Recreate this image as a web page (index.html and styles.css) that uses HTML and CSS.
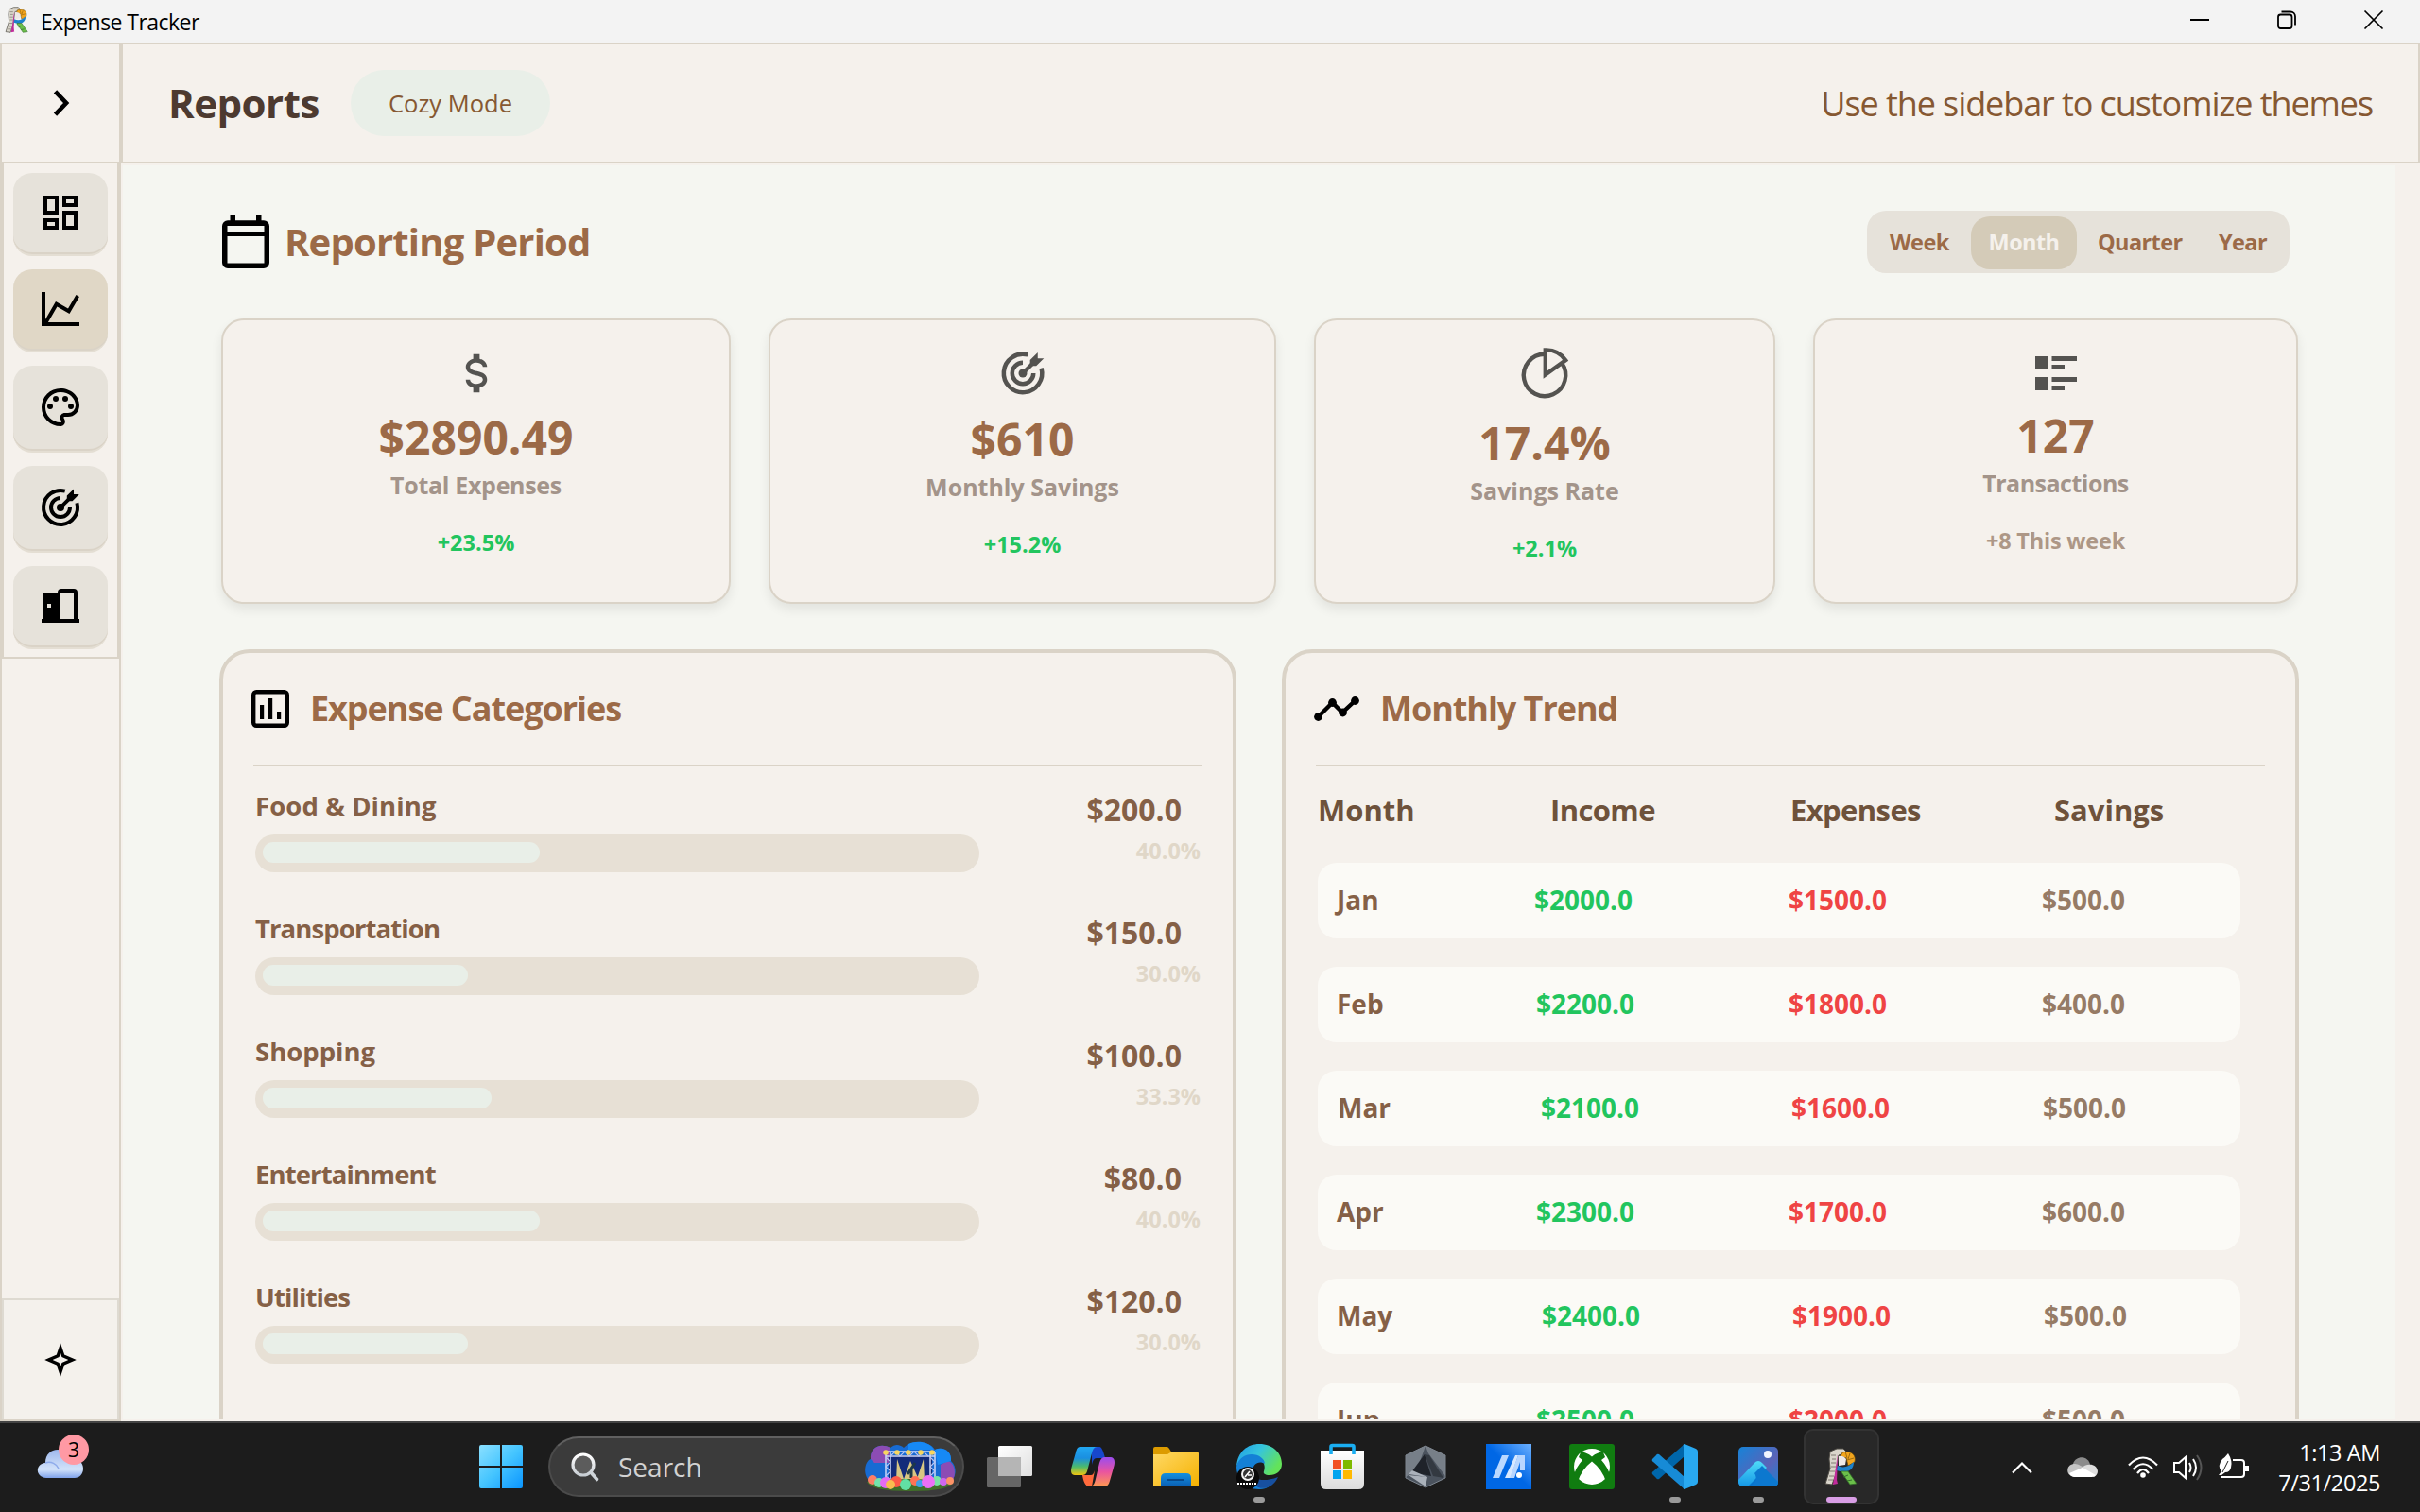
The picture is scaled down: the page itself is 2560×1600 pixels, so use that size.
FILE: index.html
```html
<!DOCTYPE html>
<html lang="en">
<head>
<meta charset="utf-8">
<title>Expense Tracker</title>
<link rel="stylesheet" href="styles.css">
</head>
<body>
<svg class="defs" width="0" height="0" aria-hidden="true">
  <defs>
    <linearGradient id="gWin" x1="0" y1="0" x2="1" y2="1"><stop offset="0" stop-color="#8be0ff"/><stop offset=".5" stop-color="#45c5ff"/><stop offset="1" stop-color="#0a95ff"/></linearGradient>
    <linearGradient id="gCloud" x1="0" y1="0" x2="0" y2="1"><stop offset="0" stop-color="#9db8ee"/><stop offset=".7" stop-color="#d3e3fa"/><stop offset="1" stop-color="#7fa2ea"/></linearGradient>
    <linearGradient id="gFolder" x1="0" y1="0" x2="1" y2="1"><stop offset="0" stop-color="#ffd966"/><stop offset="1" stop-color="#f5b100"/></linearGradient>
    <linearGradient id="gBlue" x1="0" y1="0" x2="0" y2="1"><stop offset="0" stop-color="#1490df"/><stop offset="1" stop-color="#0a5fb4"/></linearGradient>
    <linearGradient id="gCopA" x1="0" y1="0" x2="0" y2="1"><stop offset="0" stop-color="#22a7f2"/><stop offset=".4" stop-color="#1a8fe0"/><stop offset=".7" stop-color="#4cbb6c"/><stop offset="1" stop-color="#f2c50f"/></linearGradient>
    <linearGradient id="gCopB" x1="0" y1="0" x2="0" y2="1"><stop offset="0" stop-color="#9a4cf0"/><stop offset=".5" stop-color="#e954a0"/><stop offset="1" stop-color="#ff9a4f"/></linearGradient>
    <linearGradient id="gEdge" x1="0" y1="0" x2="1" y2=".5"><stop offset="0" stop-color="#1f9be8"/><stop offset=".5" stop-color="#36c5dc"/><stop offset="1" stop-color="#63e35a"/></linearGradient>
    <linearGradient id="gBag" x1="0" y1="0" x2="0" y2="1"><stop offset="0" stop-color="#fff"/><stop offset="1" stop-color="#dcdcdc"/></linearGradient>
    <linearGradient id="gPhoto" x1="0" y1="0" x2="1" y2="1"><stop offset="0" stop-color="#1683d8"/><stop offset=".6" stop-color="#5a63b8"/><stop offset="1" stop-color="#1f7fd0"/></linearGradient>
    <linearGradient id="gPeak" x1="0" y1="0" x2="0" y2="1"><stop offset="0" stop-color="#4fdcf8"/><stop offset="1" stop-color="#1597e6"/></linearGradient>
    <linearGradient id="gAsus" x1="0" y1="1" x2="1" y2="0"><stop offset=".5" stop-color="#0067e5"/><stop offset="1" stop-color="#6cb0ff"/></linearGradient>
    <linearGradient id="gTask" x1="0" y1="0" x2="1" y2="1"><stop offset="0" stop-color="#fff"/><stop offset="1" stop-color="#dfdfdf"/></linearGradient>
    <linearGradient id="gLens" x1="0" y1="0" x2="0" y2="1"><stop offset="0" stop-color="#fff"/><stop offset="1" stop-color="#c8ced4"/></linearGradient>
    <symbol id="logo" viewBox="0 0 36 40">
      <path d="M13 1 6 4 5 12 6 22 1 38 8 39 12 28 15 8 24 5 20 1z" fill="#d9d5cb" stroke="#4d4a44" stroke-width="1"/>
      <path d="M7 8h5M8 12h4M7 16h5M7 20h5M6 25h5M5 30h5M4 34h5" stroke="#807b72" stroke-width="1"/>
      <path d="M14 7 13 36 9 39 11 27z" fill="#c12b9b"/>
      <path d="M12 30 14 38 9 39z" fill="#c12b9b"/>
      <path d="M19 5c9-3 15 3 13 10l-7 4-2-8-6-2z" fill="#f2a51d" stroke="#5d4511" stroke-width=".7"/>
      <path d="m22 4 2 7M27 6l-2 6M31 11l-7 2" stroke="#8a5d0c" stroke-width=".8"/>
      <path d="M14 19c6 3 12 1 17-4 0 6-3 9-7 10-4 1-8 0-11-1z" fill="#1d82cb"/>
      <path d="M15 9c3-1 6 0 8 3l-1 6-7 1z" fill="#eee9e7"/>
      <path d="M18 25h7l9 13-7 1-9-13z" fill="#6bbf4a" stroke="#31682a" stroke-width=".8"/>
      <path d="m25 29-5 2M29 34l-5 1" stroke="#32702a" stroke-width="1"/>
    </symbol>
    <symbol id="target" viewBox="0 0 24 24">
      <path d="M14.4 3.3A9 9 0 1 0 20.7 9.6M12 7a5 5 0 1 0 5 5" fill="none" stroke="currentColor" stroke-width="2"/>
      <circle cx="12" cy="12" r="2" fill="currentColor"/>
      <path d="m12 12 4.6-4.6" stroke="currentColor" stroke-width="1.9"/>
      <path d="M15.4 8.6V5.8L19 2.2V5h2.9l-3.6 3.6z" fill="currentColor"/>
    </symbol>
  </defs>
</svg>

<div class="titlebar">
  <svg class="app-logo"><use href="#logo"/></svg>
  <span class="app-name">Expense Tracker</span>
  <div class="window-controls">
    <svg viewBox="0 0 20 20"><path d="M0 10h20" stroke="#000" stroke-width="2"/></svg>
    <svg viewBox="0 0 20 20" fill="none" stroke="#000" stroke-width="1.8"><rect x="1" y="4.5" width="14.5" height="14.5" rx="2.5"/><path d="M4.5 1.5H14a5 5 0 0 1 5 5v9"/></svg>
    <svg viewBox="0 0 20 20"><path d="m.5.5 19 19m0-19-19 19" stroke="#000" stroke-width="1.7"/></svg>
  </div>
</div>

<div class="app">
  <aside class="sidebar">
    <div class="expand"><svg class="chevron" viewBox="0 0 18 28"><path d="m2.5 1.8 11.6 12.2L2.5 26.2" fill="none" stroke="#000" stroke-width="4.6"/></svg></div>
    <nav class="nav">
      <div class="nav-btn"><svg viewBox="0 0 24 24"><path d="M4 4h6v8H4zM14 4h6v4h-6zM4 16h6v4H4zM14 12h6v8h-6z" fill="none" stroke="#000" stroke-width="2"/></svg></div>
      <div class="nav-btn active"><svg viewBox="0 0 24 24"><path d="M16 11.78 20.24 4.45l1.73 1-5.23 9.05-6.51-3.75L5.46 19H22v2H2V3h2v14.54L9.5 8z"/></svg></div>
      <div class="nav-btn tall"><svg viewBox="0 0 24 24"><path d="M12 22A10 10 0 0 1 2 12 10 10 0 0 1 12 2c5.5 0 10 4 10 9a6 6 0 0 1-6 6h-1.8c-.3 0-.5.2-.5.5 0 .1.1.2.1.3.4.5.6 1.1.6 1.7.1 1.4-1 2.5-2.4 2.5m0-18a8 8 0 0 0 0 16c.3 0 .5-.2.5-.5 0-.2-.1-.3-.1-.4-.4-.5-.6-1-.6-1.6 0-1.4 1.1-2.5 2.5-2.5H16a4 4 0 0 0 4-4c0-3.900-3.600-7-8-7"/><circle cx="6.500" cy="11.500" r="1.500"/><circle cx="9.500" cy="7.500" r="1.500"/><circle cx="14.500" cy="7.500" r="1.500"/><circle cx="17.500" cy="11.500" r="1.500"/></svg></div>
      <div class="nav-btn tall"><svg><use href="#target"/></svg></div>
      <div class="nav-btn"><svg viewBox="0 0 24 24"><path fill-rule="evenodd" d="M3 5h7.500a2 2 0 0 1 2-2H19a2 2 0 0 1 2 2v14h1v2H2v-2h1zM5 11v2h2v-2zM12 5v14h7V5z"/></svg></div>
    </nav>
    <div class="sparkle"><svg viewBox="0 0 34 34"><path d="M17 4.500 19.800 12.800 29.500 17 19.800 21.200 17 29.500 14.200 21.200 4.500 17l9.700-4.200z" fill="none" stroke="#000" stroke-width="3.400" stroke-miterlimit="8"/></svg></div>
  </aside>

  <div class="content">
    <header class="topbar">
      <h1>Reports</h1>
      <span class="mode">Cozy Mode</span>
      <span class="hint">Use the sidebar to customize themes</span>
    </header>

    <main class="page">
      <section class="period">
        <svg class="calendar" viewBox="0 0 50 56"><path d="M8.500 0h5.500v5.300h22V0h5.500v5.300H44a6 6 0 0 1 6 6V50a6 6 0 0 1-6 6H6a6 6 0 0 1-6-6V11.300a6 6 0 0 1 6-6h2.500zM5.500 11v6h39v-6zM5.500 22v28.500h39V22z" fill-rule="evenodd"/></svg>
        <h2>Reporting Period</h2>
        <div class="segments">
          <span class="seg week">Week</span><span class="seg month">Month</span><span class="seg quarter">Quarter</span><span class="seg year">Year</span>
        </div>
      </section>

      <section class="cards">
        <div class="card c1">
          <svg class="card-icon" viewBox="0 0 24 24"><path d="M7 15h2c0 1.080 1.370 2 3 2s3-.920 3-2c0-1.100-1.040-1.500-3.240-2.030C9.640 12.440 7 11.780 7 9c0-1.790 1.470-3.310 3.500-3.820V3h3v2.180C15.530 5.690 17 7.210 17 9h-2c0-1.080-1.370-2-3-2s-3 .920-3 2c0 1.100 1.040 1.500 3.240 2.030C14.360 11.560 17 12.220 17 15c0 1.790-1.470 3.310-3.500 3.820V21h-3v-2.180C8.470 18.310 7 16.790 7 15"/></svg>
          <div class="value">$2890.49</div><div class="label">Total Expenses</div><div class="delta">+23.5%</div>
        </div>
        <div class="card c2">
          <svg class="card-icon"><use href="#target"/></svg>
          <div class="value">$610</div><div class="label">Monthly Savings</div><div class="delta">+15.2%</div>
        </div>
        <div class="card c3">
          <svg class="card-icon" viewBox="0 0 54 54"><g fill="none" stroke="#545350" stroke-width="4.400"><path d="M27 6.800A22.200 22.200 0 1 0 45 16"/><path d="M27.800 2.400V28.500L49.200 13.200A25 25 0 0 0 27.800 2.400z"/></g></svg>
          <div class="value">17.4%</div><div class="label">Savings Rate</div><div class="delta">+2.1%</div>
        </div>
        <div class="card c4">
          <svg class="card-icon" viewBox="0 0 54 54"><path d="M5 9h13.500v14H5zM22.500 9H49v5H22.500zM22.500 18h13.500v5H22.500zM5 31h13.500v14H5zM22.500 31H49v5H22.500zM22.500 40h13.500v5H22.500z"/></svg>
          <div class="value">127</div><div class="label">Transactions</div><div class="delta neutral">+8 This week</div>
        </div>
      </section>

      <section class="panels">
        <div class="panel">
          <div class="panel-head">
            <svg class="icon-bars" viewBox="0 0 40 40"><rect x="2.200" y="2.200" width="35.600" height="35.600" rx="3" fill="none" stroke="#000" stroke-width="4.400"/><path d="M9 16h4.200v15H9zM18 9h4.200v22H18zM27 23h4.200v8H27z"/></svg>
            <h3>Expense Categories</h3>
          </div>
          <div class="categories">
            <div class="category food"><div class="cat-main"><div class="cat-name">Food &amp; Dining</div><div class="track"><div class="fill" style="width:293px"></div></div></div><div class="cat-side"><div class="amount">$200.0</div><div class="share">40.0%</div></div></div>
            <div class="category"><div class="cat-main"><div class="cat-name">Transportation</div><div class="track"><div class="fill" style="width:217px"></div></div></div><div class="cat-side"><div class="amount">$150.0</div><div class="share">30.0%</div></div></div>
            <div class="category shopping"><div class="cat-main"><div class="cat-name">Shopping</div><div class="track"><div class="fill" style="width:242px"></div></div></div><div class="cat-side"><div class="amount">$100.0</div><div class="share">33.3%</div></div></div>
            <div class="category"><div class="cat-main"><div class="cat-name">Entertainment</div><div class="track"><div class="fill" style="width:293px"></div></div></div><div class="cat-side"><div class="amount">$80.0</div><div class="share">40.0%</div></div></div>
            <div class="category"><div class="cat-main"><div class="cat-name">Utilities</div><div class="track"><div class="fill" style="width:217px"></div></div></div><div class="cat-side"><div class="amount">$120.0</div><div class="share">30.0%</div></div></div>
          </div>
        </div>

        <div class="panel trend">
          <div class="panel-head">
            <svg class="icon-trend" viewBox="0 0 48 26"><path d="M4.500 21.500 19.500 6.500 30 17 43.500 4.500" fill="none" stroke="#000" stroke-width="4.400"/><circle cx="4.500" cy="21.500" r="4.400"/><circle cx="19.500" cy="6.500" r="4.400"/><circle cx="30.500" cy="17" r="4.400"/><circle cx="43.500" cy="4.500" r="4.400"/></svg>
            <h3>Monthly Trend</h3>
          </div>
          <div class="trend-head"><span>Month</span><span class="tight">Income</span><span class="tight">Expenses</span><span>Savings</span></div>
          <div class="trend-rows">
            <div class="trend-row"><span>Jan</span><span class="in">$2000.0</span><span class="out">$1500.0</span><span class="save">$500.0</span></div>
            <div class="trend-row feb"><span>Feb</span><span class="in">$2200.0</span><span class="out">$1800.0</span><span class="save">$400.0</span></div>
            <div class="trend-row mar"><span>Mar</span><span class="in">$2100.0</span><span class="out">$1600.0</span><span class="save">$500.0</span></div>
            <div class="trend-row apr"><span>Apr</span><span class="in">$2300.0</span><span class="out">$1700.0</span><span class="save">$600.0</span></div>
            <div class="trend-row may"><span>May</span><span class="in">$2400.0</span><span class="out">$1900.0</span><span class="save">$500.0</span></div>
            <div class="trend-row apr"><span>Jun</span><span class="in">$2500.0</span><span class="out">$2000.0</span><span class="save">$500.0</span></div>
          </div>
        </div>
      </section>
    </main>
  </div>
</div>

<footer class="taskbar">
  <div class="weather">
    <svg viewBox="0 0 48 30"><path d="M9 30C-3 29-3 15 8 14 8 5 14 0 21 0c8 0 12 5 13 10 8-1 14 3 14 10 0 6-4 10-9 10z" fill="url(#gCloud)"/><path d="M8 14c6-2 12 1 14 6" fill="none" stroke="#8eabeb" stroke-width="1.500"/></svg>
    <span class="badge">3</span>
  </div>
  <div class="slot start"><svg width="46" height="46" viewBox="0 0 46 46" fill="url(#gWin)"><path d="M2 0h20v22H0V2q0-2 2-2M24 0h20q2 0 2 2v20H24zM0 24h22v22H2q-2 0-2-2zM24 24h22v20q0 2-2 2H24z"/></svg></div>
  <div class="search">
    <svg class="lens" viewBox="0 0 30 31"><circle cx="13" cy="13" r="11" fill="#5c5c5c" stroke="url(#gLens)" stroke-width="3.200"/><path d="m21 21 6.500 7.500" stroke="#cfd5da" stroke-width="3.600" stroke-linecap="round"/></svg>
    <span>Search</span>
    <svg class="festival" viewBox="0 0 96 52">
      <path d="M8 44C-4 36 0 20 6 18 5 6 16 0 27 6c5-5 11-3 14 0C48-2 68-2 74 8c9-4 18 2 17 12 7 6 6 18-2 24z" fill="#176bd3"/>
      <path d="M6 18C5 6 16 0 27 6v16H10zM87 20c8 0 12 18 2 24h-9V24z" fill="#8c4cb4"/>
      <path d="M74 8c9-4 18 2 17 12l-14 4zM46 2c8-4 22-3 27 6H46z" fill="#1689f5"/>
      <path d="M25 14h46v28H25z" fill="#142b7a"/>
      <path d="m34 18 8 24h-9zM62 18l-8 24h9zM48 20l10 22H40z" fill="#d8c683"/>
      <path d="M22 10h52M22 15h52M22 10v30M27 10v30M69 10v30M74 10v30" stroke="#cbd7f7" stroke-width="1.500"/>
      <path d="m22 16 5 5-5 5 5 5-5 5 5 4M69 16l5 5-5 5 5 5-5 5 5 4M27 15l5-5 5 5 5-5 5 5 5-5 5 5 5-5 5 5" fill="none" stroke="#b8c5f5" stroke-width="1.200"/>
      <path d="m45 34 8-12M49 28v10" stroke="#1e3848" stroke-width="3"/>
      <g fill="#f9d65e"><circle cx="22" cy="11" r="2.800"/><circle cx="34" cy="11" r="2.800"/><circle cx="46" cy="11" r="2.800"/><circle cx="59" cy="11" r="2.800"/><circle cx="71" cy="11" r="2.800"/></g>
      <path d="M2 42q46-6 92 0-4 10-46 10T2 42" fill="#416f2a"/>
      <g><circle cx="8" cy="40" r="5" fill="#fc7f66"/><circle cx="15" cy="43" r="5" fill="#73e3ac"/><circle cx="22" cy="43" r="6" fill="#e46bf3"/><circle cx="33" cy="42" r="6" fill="#ff5b47"/><circle cx="27" cy="45" r="5" fill="#fabd50"/><circle cx="53" cy="41" r="5" fill="#ff7255"/><circle cx="43" cy="45" r="6" fill="#61dfa4"/><circle cx="58" cy="44" r="4" fill="#42a1e6"/><circle cx="76" cy="41" r="5" fill="#79e5a4"/><circle cx="67" cy="42" r="7" fill="#ec70f5"/><circle cx="83" cy="42" r="4" fill="#ce67ee"/><circle cx="90" cy="41" r="4" fill="#fd9267"/></g>
    </svg>
  </div>
  <div class="apps">
    <div class="slot"><svg width="48" height="44" viewBox="0 0 48 44"><rect x="0" y="12" width="36" height="32" rx="1.500" fill="#666"/><rect x="12" y="0" width="36" height="32" rx="1.500" fill="url(#gTask)"/><path d="M12 12h24v20H12z" fill="#b5b5b5"/></svg></div>
    <div class="slot"><svg width="46" height="42" viewBox="0 0 46 42"><path d="M22 0h8c3 0 5 8 6 12h-9c-3 0-4 3-5 7z" fill="#1747cc"/><path d="M10 0h18c-4 0-5 3-6 7l-5 19c-1 3-3 4-5 4H4c-4 0-5-4-3-10L5 6c1-4 2-6 5-6" fill="url(#gCopA)"/><path d="M12 30h9c2 0 3-2 4-5l-3 17h-3c-4 0-6-6-7-12" fill="#ff6a3c"/><path d="M36 42H20c4 0 5-4 6-8l4-17c1-4 3-6 5-6h7c4 0 5 5 3 11l-4 14c-1 4-3 6-5 6" fill="url(#gCopB)"/></svg></div>
    <div class="slot"><svg width="48" height="42" viewBox="0 0 48 42"><path d="M0 2q0-2 2-2h12q2 0 3 2l3 5v6H0z" fill="#dc9b00"/><path d="M0 8h15l5-3h26q2 0 2 2v35H0z" fill="url(#gFolder)"/><path d="M8 42v-9q0-5 5-5h22q5 0 5 5v9z" fill="url(#gBlue)"/><path d="M15 35h18" stroke="#07498c" stroke-width="2"/></svg></div>
    <div class="slot"><svg width="48" height="48" viewBox="0 0 48 48"><path d="M0 24C1 8 12 0 24 0c15 0 24 10 24 21 0 8-6 12-13 12-5 0-7-2-6-4 3-8-3-16-13-16-8 0-14 5-16 11" fill="url(#gEdge)"/><path d="M0 24c2-9 9-13 16-13 8 0 14 5 14 10-6-4-13 0-13 8 0 9 9 17 19 15-4 3-8 4-12 4C10 48 0 37 0 24" fill="#1480d6"/><path d="M17 29c0 9 11 12 27 6-4 9-13 14-21 11-5-3-7-10-6-17" fill="#1750a0"/><circle cx="12" cy="36" r="12" fill="#090909"/><circle cx="12" cy="32" r="6" fill="#333" stroke="#f3f3f3" stroke-width="2"/><path d="m9 35 5-6m-2 4h4" stroke="#fff" stroke-width="1.600"/><path d="M1 42h21" stroke="#fff" stroke-width="2" stroke-dasharray="2 1"/></svg><i class="dot"></i></div>
    <div class="slot"><svg width="46" height="48" viewBox="0 0 46 48"><path d="M0 7h46v35q0 6-6 6H6q-6 0-6-6z" fill="url(#gBag)"/><path d="M11 11V3q0-1.500 1.500-1.500h21Q35 1.500 35 3v8" fill="none" stroke="#1aaef2" stroke-width="3.600"/><path d="M13 17h9v9h-9z" fill="#f25022"/><path d="M24 17h9v9h-9z" fill="#7fba00"/><path d="M13 28h9v9h-9z" fill="#00a4ef"/><path d="M24 28h9v9h-9z" fill="#ffb900"/></svg></div>
    <div class="slot"><svg width="42" height="44" viewBox="0 0 42 44"><path d="m21 0 21 10v24L21 44 0 34V10z" fill="#4b535e"/><path d="M21 0 0 10v23l12-8zM21 0l21 10v22L24 8z" fill="#777f88"/><path d="m20 9 7 23-21-4z" fill="#1f232a"/><path d="m20 9 9 23 11 2L25 10z" fill="#333941"/><path d="m3 30 20 3-16-7zM3 31l18 12 2-10z" fill="#aab1ba"/><path d="m21 0 21 10v24L21 44 0 34V10z" fill="none" stroke="#7e8690"/></svg></div>
    <div class="slot"><svg width="48" height="48" viewBox="0 0 48 48"><path fill="url(#gAsus)" d="M0 0h48v48H0z"/><path d="M17 12h7L14 36H7z" fill="#bad8ff"/><path d="M31 12h3L26 36h-6z" fill="#d7e8ff"/><path d="M34 12h7v16h-5V19l-6 17h-5z" fill="#b8d6ff"/><circle cx="35" cy="33" r="3" fill="#fff"/></svg></div>
    <div class="slot"><svg width="48" height="48" viewBox="0 0 48 48"><rect width="48" height="48" rx="3" fill="#107c10"/><circle cx="24" cy="24" r="19" fill="#fff"/><path d="M12 9q5-1 12 4.500Q31 8 36 9l2 5-4 3q8 9 9 17l-4 6Q35 27 24 18.500 13 27 9 40l-4-6q1-8 9-17l-4-3z" fill="#107c10"/></svg></div>
    <div class="slot"><svg width="48" height="48" viewBox="0 0 48 48"><path d="M34 0v13L7 37q-2 1-3-1l-4-4q-1-2 1-3z" fill="#0066aa"/><path d="M34 48V35L7 11q-2-1-3 1l-4 4q-1 2 1 3z" fill="#178bd6"/><path d="m34 0 12 5q2 1 2 3v32q0 2-2 3l-12 5q-2 0-1-3V3q-1-3 1-3" fill="#29a9f1"/></svg><i class="dot"></i></div>
    <div class="slot"><svg width="42" height="42" viewBox="0 0 42 42"><rect width="42" height="42" rx="5" fill="url(#gPhoto)"/><path d="M7 42 21 27q4-4 8 0l13 12q-1 3-5 3z" fill="#0875ce"/><path d="m0 35 17-18q4-4 8 0l5 5-20 20H5q-5 0-5-5z" fill="url(#gPeak)"/><path d="m17 28 8-8 17 17q0 5-5 5H12q10-6 5-14" fill="#0c78cf"/><circle cx="31" cy="8" r="4" fill="#f1f5ff"/></svg><i class="dot"></i></div>
    <div class="slot current"><svg width="36" height="40"><use href="#logo"/></svg><i class="dot wide"></i></div>
  </div>
  <div class="tray">
    <svg class="t-up" viewBox="0 0 22 12"><path d="M1 11.500 11 1.500l10 10" fill="none" stroke="#fff" stroke-width="2.200"/></svg>
    <svg class="t-cloud" viewBox="0 0 32 21"><path d="M6 7C9-2 22-2 24 8L14 14z" fill="#8c8c8c"/><path d="M4 20c-6-3-5-13 4-13 3 0 8 3 13 6z" fill="#c4c4c4"/><path d="M14 12c6-6 17-6 18 3 0 3-2 5-4 6z" fill="#dedede"/><path d="m2 17 14-6 14 8q-2 2-4 2H7q-3 0-5-4" fill="#fff"/></svg>
    <svg class="t-wifi" viewBox="0 0 32 23"><g fill="none" stroke="#fff" stroke-width="2.200"><path d="M1 9.500Q16-6.500 31 9.500M5.500 14Q16 2.500 26.500 14M10 18Q16 10 22 18"/></g><circle cx="16" cy="20" r="2.800" fill="#fff"/></svg>
    <svg class="t-vol" viewBox="0 0 32 28"><g fill="none" stroke="#fff" stroke-width="2"><path d="M13 3v22l-7-6H1V9h5zM17 9q3 5 0 10M21 5q6 9 0 18"/><path d="M25 1q9 13 0 26" stroke="#555"/></g></svg>
    <svg class="t-bat" viewBox="0 0 32 26"><path d="M15 7h9q3 0 3 3v12q0 3-3 3H3" fill="none" stroke="#fff" stroke-width="2"/><path d="M28 13h4v6h-4zM10 0q5 8 3 15-1 5-6 5l-4 3H0l3-4q-5-6 1-13 3-2 6-6" fill="#fff"/><path d="m4 20 6-12" stroke="#1c1c1c"/></svg>
    <div class="clock"><div>1:13 AM</div><div>7/31/2025</div></div>
  </div>
</footer>
</body>
</html>
```
FILE: styles.css
```css
* { box-sizing: border-box; margin: 0; padding: 0; }
body {
  width: 2560px; height: 1600px; overflow: hidden;
  display: flex; flex-direction: column;
  font-family: "Open Sans", "Noto Sans", sans-serif;
  background: #f5f1ec; white-space: nowrap;
}
svg { display: block; flex: none; overflow: visible; }
.defs { position: absolute; }

.titlebar { height: 45px; flex: none; display: flex; align-items: center; background: #f3f3f3; padding: 0 39px 3px 4px; }
.app-logo { width: 28px; height: 28px; }
.app-name { margin-left: 11px; padding-top: 4px; font-size: 23px; line-height: 32px; letter-spacing: -.55px; color: #000; }
.window-controls { margin-left: auto; display: flex; gap: 72px; }
.window-controls svg { width: 20px; height: 20px; }

.app { height: 1459px; flex: none; display: flex; }
.sidebar { width: 128px; flex: none; display: flex; flex-direction: column; border: 2px solid #dad3c7; }
.expand { height: 124px; flex: none; display: flex; align-items: center; padding-left: 54px; }
.chevron { width: 18px; height: 28px; }
.nav { height: 526px; flex: none; border: 2px solid #dad3c7; padding: 10px; display: flex; flex-direction: column; gap: 14px; }
.nav-btn {
  height: 88px; flex: none; border-radius: 20px; background: #e6e2da;
  display: flex; align-items: center; justify-content: center; padding-bottom: 2px;
  border-bottom: 2px solid #e4ded3; box-shadow: inset 0 -2px 0 #dad3c7;
}
.nav-btn.tall { height: 92px; }
.nav-btn.active { background: #e0d7c6; }
.nav-btn svg { width: 48px; height: 48px; }
.sparkle { margin-top: auto; height: 128px; border: 2px solid #dedad1; border-bottom: 0; background: #f4f1ec; display: flex; align-items: center; justify-content: center; }
.sparkle svg { width: 34px; height: 34px; }

.content { flex: 1; display: flex; flex-direction: column; min-width: 0; }
.topbar { height: 128px; flex: none; border: 2px solid #dad3c7; display: flex; align-items: center; padding: 0 48px 0 48px; }
.topbar h1 { font-size: 42px; line-height: 60px; width: 193px; letter-spacing: -.5px; color: #4d3a30; }
.mode { width: 211px; height: 70px; border-radius: 35px; background: #e9efe8; display: flex; align-items: center; justify-content: center; font-size: 25.500px; color: #865832; padding-bottom: 1px; }
.hint { margin-left: auto; font-size: 36px; line-height: 50px; letter-spacing: -1.080px; color: #865832; padding-top: 1px; }

.page { height: 1331px; flex: none; overflow: hidden; background: #f5f6f1; border: 2px solid #f5f1ec; border-right-width: 26px; padding: 48px 103px 0 104px; }
.period { height: 66px; display: flex; align-items: center; }
.calendar { width: 50px; height: 56px; margin-left: 1px; }
.period h2 { margin-left: 16px; font-size: 40px; line-height: 56px; letter-spacing: -.8px; color: #9c6a47; padding-bottom: 1px; }
.segments { margin-left: auto; margin-right: 9px; width: 447px; height: 66px; padding: 6px 0 4px 24px; display: flex; border-radius: 20px; background: #e6e2da; }
.seg { height: 56px; line-height: 55px; font-size: 23.500px; letter-spacing: -.6px; font-weight: 700; color: #9c6a47; flex: none; }
.week { width: 86px; }
.month { width: 112px; margin-right: 22px; border-radius: 20px; background: #d4cbb8; color: #f5f1ec; text-align: center; }
.quarter { width: 128px; }

.cards { margin-top: 48px; display: grid; grid-template-columns: 539px 537px 488px 513px; gap: 40px; margin-left: 0; width: 2197px; }
.card { height: 302px; border: 2px solid #dad3c7; border-radius: 24px; background: #f5f1ec; box-shadow: 0 6px 12px rgba(0,0,0,.08); display: flex; flex-direction: column; align-items: center; padding-top: 29px; }
.card-icon { width: 54px; height: 54px; fill: #545350; color: #545350; }
.value { font-size: 48px; line-height: 64px; font-weight: 700; color: #9c6a47; }
.c1 .value { margin-top: 9px; }
.c2 .value { margin-top: 11px; }
.c3 .value { margin-top: 15px; }
.c4 .value { margin-top: 7px; }
.label { margin-top: 1px; font-size: 25px; line-height: 34px; font-weight: 700; color: #a3948a; }
.c1 .label { letter-spacing: -.3px; }
.c4 .label { letter-spacing: -.5px; }
.delta { margin-top: 28px; font-size: 23.500px; line-height: 32px; font-weight: 700; color: #22c55e; }
.delta.neutral { color: #ad9786; letter-spacing: -.2px; }

.panels { margin: 48px 0 0 -2px; display: flex; gap: 48px; }
.panel { width: 1076px; flex: none; height: 1000px; border: 4px solid #dad3c7; border-radius: 32px; background: #f5f1ec; padding: 0 32px; }
.panel-head { height: 120px; border-bottom: 2px solid #dad3c7; display: flex; align-items: center; padding-bottom: 2px; }
.panel-head h3 { font-size: 36px; line-height: 50px; letter-spacing: -1.050px; color: #9c6a47; padding-top: 1px; }
.icon-bars { width: 40px; height: 40px; margin: 2px 22px 0 -2px; }
.icon-trend { width: 48px; height: 26px; margin: 2px 22px 0 -2px; }

.categories { padding: 22px 2px 0; }
.category { height: 130px; display: flex; justify-content: space-between; }
.cat-main { width: 766px; }
.cat-name { height: 40px; line-height: 40px; font-size: 27.500px; letter-spacing: -.9px; font-weight: 700; color: #856046; }
.food .cat-name { letter-spacing: .1px; }
.shopping .cat-name { letter-spacing: 0; }
.track { margin-top: 10px; height: 40px; border-radius: 20px; background: #e7e0d5; padding: 8px; }
.fill { height: 22px; border-radius: 11px; background: #e9efe8; }
.cat-side { text-align: right; font-weight: 700; padding-top: 2px; }
.amount { font-size: 32px; line-height: 44px; color: #856046; padding-right: 20px; }
.share { margin-top: 5px; font-size: 23.500px; line-height: 32px; color: #e0d7c8; }

.trend-head { margin: 24px 0 0 2px; height: 44px; line-height: 44px; font-size: 31px; font-weight: 700; color: #6e523b; display: grid; grid-template-columns: 246px 254px 279px 1fr; }
.tight { letter-spacing: -.6px; }
.trend-rows { margin: 34px 0 0 2px; width: 976px; display: flex; flex-direction: column; gap: 30px; }
.trend-row { height: 80px; line-height: 79px; border-radius: 20px; background: #fbfaf6; padding-left: 20px; display: grid; grid-template-columns: 209px 269px 268px 1fr; font-size: 28px; font-weight: 700; color: #856046; }
.in { color: #22c55e; }
.out { color: #ef4444; }
.save { color: #967b65; }
.feb, .apr { grid-template-columns: 211px 267px 268px 1fr; }
.mar { padding-left: 21px; grid-template-columns: 215px 265px 266px 1fr; }
.may { grid-template-columns: 217px 265px 266px 1fr; }

.taskbar { height: 96px; flex: none; display: flex; align-items: center; background: #1c1c1c; border-top: 2px solid #444; color: #fff; }
.weather { width: 486px; height: 94px; position: relative; padding: 28px 0 0 40px; }
.weather svg { width: 48px; height: 30px; }
.badge { position: absolute; left: 62px; top: 12px; width: 32px; height: 32px; border-radius: 50%; background: #ff99a4; color: #000; font-size: 21px; line-height: 32px; text-align: center; }
.slot { width: 88px; height: 80px; flex: none; display: flex; align-items: center; justify-content: center; position: relative; margin-bottom: 2px; }
.search { width: 440px; height: 64px; margin: 0 0 2px 6px; border-radius: 32px; background: #3b3b3b; border: 2px solid #4b4b4b; border-top-color: #606060; display: flex; align-items: center; padding: 0 7px 0 22px; color: #d2d2d2; font-size: 28px; }
.lens { width: 30px; height: 31px; margin-right: 20px; }
.festival { width: 96px; height: 52px; margin-left: auto; }
.apps { display: flex; margin-left: 4px; }
.dot { position: absolute; left: 38px; bottom: 2px; width: 12px; height: 6px; border-radius: 3px; background: #9a9a9a; }
.dot.wide { left: 28px; width: 32px; background: #d99ee6; }
.current::before { content: ""; position: absolute; inset: 0 4px; border: 2px solid #333; border-radius: 10px; background: #282828; }
.current svg { position: relative; }
.tray { margin-left: auto; display: flex; align-items: center; padding: 0 39px 1px 0; }
.t-up { width: 22px; height: 12px; margin-right: 37px; }
.t-cloud { width: 32px; height: 21px; margin-right: 32px; }
.t-wifi { width: 32px; height: 23px; margin-right: 16px; }
.t-vol { width: 32px; height: 28px; margin-right: 16px; }
.t-bat { width: 32px; height: 26px; margin: -4px 30px 0 0; }
.clock { width: 112px; padding-right: 3px; text-align: right; font-size: 23.500px; line-height: 32px; letter-spacing: -.4px; }
```
